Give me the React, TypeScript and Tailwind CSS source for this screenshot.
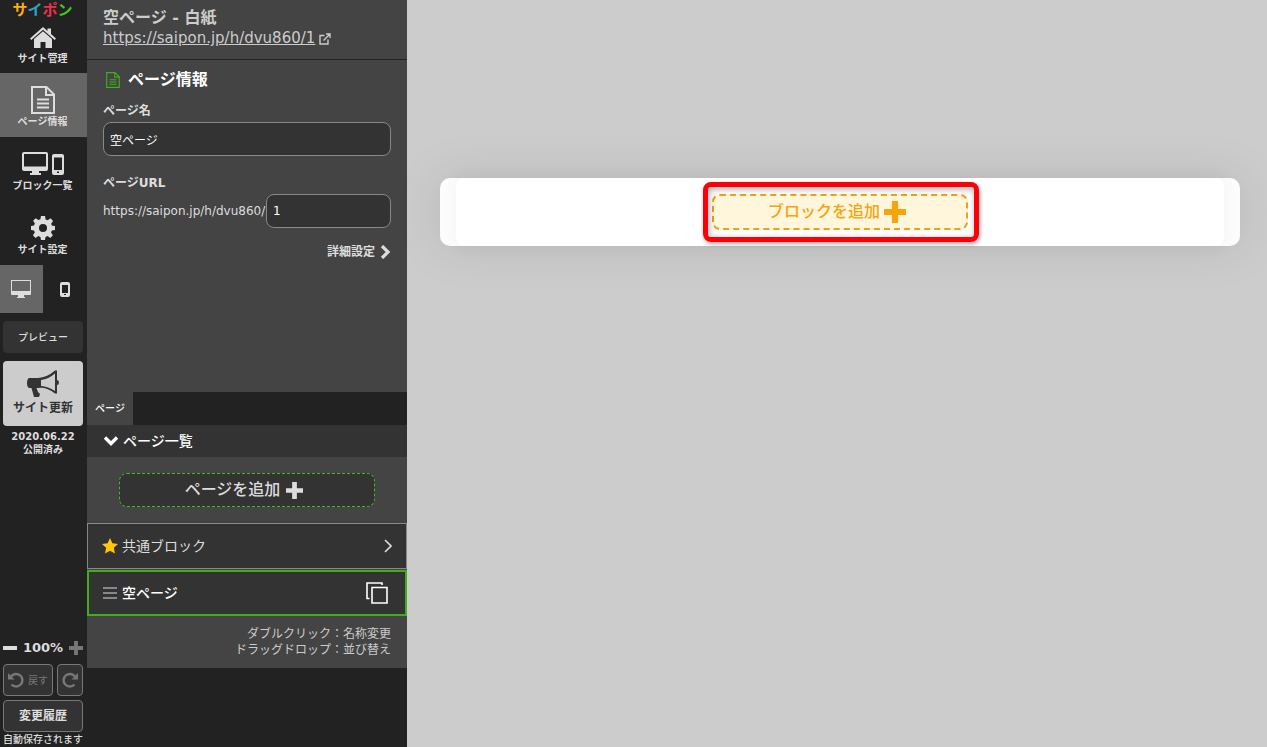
import { useState } from 'react'
import type { ReactNode } from 'react'
import clsx from 'clsx'

type NavItem = { id: string; label: string; icon: ReactNode }

const navItems: NavItem[] = [
  { id: 'site', label: 'サイト管理', icon: <HomeIcon /> },
  { id: 'page', label: 'ページ情報', icon: <PageIcon className="h-7 w-6" /> },
  { id: 'blocks', label: 'ブロック一覧', icon: <DevicesIcon /> },
  { id: 'settings', label: 'サイト設定', icon: <GearIcon /> },
]

export default function App() {
  const [active, setActive] = useState('page')

  return (
    <div className="flex h-screen overflow-hidden bg-[#ccc] font-['DejaVu_Sans','Noto_Sans_CJK_JP',sans-serif] text-[#ddd]">
      <Sidebar active={active} onSelect={setActive} />
      <PagePanel />
      <Canvas />
    </div>
  )
}

function Sidebar({ active, onSelect }: { active: string; onSelect: (id: string) => void }) {
  const [device, setDevice] = useState('pc')
  const [zoom, setZoom] = useState(100)

  return (
    <aside className="flex w-[87px] shrink-0 flex-col bg-[#222] font-bold">
      <a href="#" className="h-[18px] pt-0.5 pr-0.5 text-center text-[15px] leading-4 font-bold">
        <span className="text-[#ffae10]">サ</span>
        <span className="text-[#25a8c8]">イ</span>
        <span className="text-[#f0324b]">ポ</span>
        <span className="text-[#45c81e]">ン</span>
      </a>

      <nav className="flex flex-col">
        {navItems.map((item, i) => (
          <button
            key={item.id}
            onClick={() => onSelect(item.id)}
            className={clsx(
              'flex flex-col items-center justify-end gap-0.5 pr-0.5 text-[10px] leading-3 hover:text-white',
              i === 0 ? 'h-[55px] pb-2' : 'h-16 pb-[9px]',
              active === item.id && 'bg-[#666]',
            )}
          >
            <span className="flex h-7 items-center">{item.icon}</span>
            {item.label}
          </button>
        ))}
      </nav>

      {/* Device switch */}
      <div className="grid h-12 grid-cols-2 pr-px">
        <button
          aria-label="PC"
          onClick={() => setDevice('pc')}
          className={clsx('flex items-center justify-center pr-0.5', device === 'pc' && 'bg-[#666]')}
        >
          <svg viewBox="0 0 22 18" className="h-[18px] w-[22px]" fill="currentColor">
            <path fillRule="evenodd" d="M1 0h20v14q0 1-1 1h-6v2h1v1H7v-1h1v-2H2q-1 0-1-1zM2 1v10h18V1z" />
          </svg>
        </button>
        <button
          aria-label="スマートフォン"
          onClick={() => setDevice('sp')}
          className={clsx('flex items-center justify-center', device === 'sp' && 'bg-[#666]')}
        >
          <svg viewBox="0 0 10 15" className="h-[15px] w-2.5" fill="currentColor">
            <path fillRule="evenodd" d="M2 0h6q2 0 2 2v11q0 2-2 2H2q-2 0-2-2V2q0-2 2-2zm0 3v8h6V3zm2 9v1h2v-1z" />
          </svg>
        </button>
      </div>

      <div className="flex flex-col gap-2 pt-2 pr-1 pl-[3px]">
        <button className="h-8 rounded bg-[#333] text-[10px] font-medium">プレビュー</button>
        <button className="flex h-[65px] flex-col items-center justify-end gap-0.5 rounded bg-[#ccc] pb-2.5 text-xs leading-4 text-[#333]">
          <BullhornIcon />
          サイト更新
        </button>
      </div>
      <p className="pt-1 pr-px text-center text-[10px] leading-[13px]">
        2020.06.22
        <br />
        公開済み
      </p>

      <div className="mt-auto pr-1 pl-[3px]">
        <div className="flex h-8 items-center justify-between text-[13px]">
          <button aria-label="縮小" onClick={() => setZoom(zoom - 10)}>
            <svg viewBox="0 0 14 4" className="h-1 w-3.5" fill="currentColor">
              <path d="M0 0h14v4H0z" />
            </svg>
          </button>
          <span>{zoom}%</span>
          <button aria-label="拡大" onClick={() => setZoom(zoom + 10)} className="text-[#777]">
            <PlusIcon className="size-3.5" />
          </button>
        </div>
        <div className="flex gap-1 text-[#777]">
          <button className="flex h-8 flex-1 items-center justify-center gap-1 rounded border border-[#777] bg-[#333] text-[10px] font-normal">
            <UndoIcon />
            戻す
          </button>
          <button aria-label="やり直す" className="flex h-8 w-[26px] items-center justify-center rounded border border-[#777] bg-[#333]">
            <UndoIcon className="-scale-x-100" />
          </button>
        </div>
        <button className="mt-1 h-8 w-full rounded border border-[#777] bg-[#333] text-xs">変更履歴</button>
        <p className="text-center text-[10px] leading-[15px] font-medium whitespace-nowrap">自動保存されます</p>
      </div>
    </aside>
  )
}

function PagePanel() {
  const [name, setName] = useState('空ページ')
  const [slug, setSlug] = useState('1')
  const inputClass =
    'h-[34px] rounded-lg border border-[#888] bg-[#333] px-1.5 text-xs text-white focus:outline-none focus:border-[#ccc]'

  return (
    <section className="flex w-80 shrink-0 flex-col bg-[#222]">
      <header className="border-b border-[#222] bg-[#444] px-4 pt-[7px] pb-2.5 text-[#ccc]">
        <h1 className="text-base leading-[21px] font-bold">空ページ - 白紙</h1>
        <a href="https://saipon.jp/h/dvu860/1" className="flex items-center gap-1 text-[15px] leading-[21px]">
          <span className="underline">https://saipon.jp/h/dvu860/1</span>
          <ExternalIcon />
        </a>
      </header>

      <div className="h-[332px] shrink-0 bg-[#444] px-4 pt-[7px]">
        <h2 className="flex items-center gap-2 pl-[3px] text-base leading-[26px] font-bold text-white">
          <PageIcon className="h-4 w-3.5 text-[#3eae1c]" />
          ページ情報
        </h2>

        <label htmlFor="page-name" className="mt-2.5 block text-xs leading-4 font-bold">
          ページ名
        </label>
        <input
          id="page-name"
          value={name}
          onChange={(e) => setName(e.target.value)}
          className={clsx(inputClass, 'mt-[3px] w-full')}
        />

        <label htmlFor="page-url" className="mt-[19px] block text-xs leading-4 font-bold">
          ページURL
        </label>
        <div className="mt-[3px] flex items-center justify-between text-xs">
          <span>https://saipon.jp/h/dvu860/</span>
          <input
            id="page-url"
            value={slug}
            onChange={(e) => setSlug(e.target.value)}
            className={clsx(inputClass, 'w-[125px]')}
          />
        </div>

        <button className="mt-4 ml-auto flex items-center gap-1 text-xs leading-4 font-bold">
          詳細設定
          <svg viewBox="0 0 10 14" className="h-3.5 w-3" fill="none" stroke="currentColor" strokeWidth="3.2">
            <path d="M2 1l6 6-6 6" />
          </svg>
        </button>
      </div>

      {/* Tabs */}
      <div className="flex h-[33px] shrink-0" role="tablist">
        <button role="tab" aria-selected="true" className="w-[46px] bg-[#444] text-[10px] font-medium text-white">
          ページ
        </button>
      </div>

      <button className="flex h-8 shrink-0 items-center gap-1 bg-[#333] px-4 text-sm leading-5 font-medium text-white">
        <svg viewBox="0 0 16 10" className="h-2.5 w-4" fill="none" stroke="currentColor" strokeWidth="3.4">
          <path d="M2 1.5l6 6 6-6" />
        </svg>
        ページ一覧
      </button>

      <div className="bg-[#444]">
        <div className="px-8 py-4">
          <button className="flex h-[34px] w-full items-center justify-center gap-1.5 rounded-lg border border-dashed border-[#45b81c] bg-[#333] pr-1.5 text-base font-medium">
            ページを追加
            <PlusIcon className="size-[17px]" />
          </button>
        </div>

        <ul className="flex flex-col gap-px">
          <li>
            <button className="flex h-[46px] w-full items-center gap-1 border border-[#888] bg-[#333] pr-3.5 pb-px pl-3.5 text-sm">
              <svg viewBox="0 0 16 16" className="size-4" fill="#ffc80a">
                <path d="M8 0l2.4 5.2 5.6.7-4.1 3.9 1 5.7L8 12.7l-4.9 2.8 1-5.7L0 5.9l5.6-.7z" />
              </svg>
              共通ブロック
              <svg viewBox="0 0 8 14" className="ml-auto h-3.5 w-2" fill="none" stroke="currentColor" strokeWidth="1.6">
                <path d="M1 1l6 6-6 6" />
              </svg>
            </button>
          </li>
          <li className="flex h-[46px] items-center gap-1 border-2 border-[#3eae1c] bg-[#333] pr-[17px] pb-px pl-[13px] text-sm font-medium text-white">
            <svg viewBox="0 0 16 12" className="h-3 w-4" fill="#888">
              <path d="M1 0h14v2H1zM1 5h14v2H1zM1 10h14v2H1z" />
            </svg>
            空ページ
            <button aria-label="複製" className="ml-auto">
              <svg viewBox="0 0 22 22" className="size-[22px]" fill="none" stroke="currentColor" strokeWidth="1.6">
                <path d="M6 5.500h15V21H6zM3.500 16.500H1V1h15v2" />
              </svg>
            </button>
          </li>
        </ul>

        <p className="px-4 pt-2.5 pb-2.5 text-right text-xs leading-4 text-[#ccc]">
          ダブルクリック：名称変更
          <br />
          ドラッグドロップ：並び替え
        </p>
      </div>
    </section>
  )
}

function Canvas() {
  return (
    <main className="min-w-0 flex-1 pt-[178px] pr-[27px] pl-[33px]">
      <div className="rounded-[10px] bg-[#fcfcfc] px-4 shadow-[0_0_50px_rgba(0,0,0,0.1)]">
        <div className="flex h-[68px] items-center justify-center rounded-lg bg-white shadow-[0_0_16px_rgba(0,0,0,0.04)]">
          <div className="relative">
            <button className="flex h-9 w-64 items-center justify-center gap-1 rounded-lg border-2 border-dashed border-[#f0a010] bg-[#fff6dc] pr-1.5 text-base font-medium text-[#f7a30c]">
              ブロックを追加
              <PlusIcon className="size-[22px]" />
            </button>
            {/* Highlight ring around the button */}
            <div className="pointer-events-none absolute -inset-y-3 -right-[11px] -left-[9px] rounded-lg border-5 border-[#fb0007] shadow-[1px_2px_4px_rgba(0,0,0,0.35),inset_1px_2px_6px_rgba(0,0,0,0.35)]" />
          </div>
        </div>
      </div>
    </main>
  )
}

function HomeIcon() {
  return (
    <svg viewBox="0 0 26 21" className="h-[21px] w-[26px]" fill="currentColor">
      <path d="M13 0l4.500 4V1.500H21V7l5 4.500-1.300 1.500L13 2.800 1.300 13 0 11.500z" />
      <path d="M13 4.300l9 7.800V21h-6.500v-6h-5v6H4v-8.900z" />
    </svg>
  )
}

function PageIcon({ className }: { className?: string }) {
  return (
    <svg viewBox="0 0 24 28" className={className} fill="none" stroke="currentColor" strokeWidth="2">
      <path d="M1 1h14.500L23 8.500V27H1zM15 1v8h8" />
      <path d="M6 13.500h12M6 17.500h12M6 21.500h12" />
    </svg>
  )
}

function DevicesIcon() {
  return (
    <svg viewBox="0 0 42 24" className="h-6 w-[42px]" fill="currentColor">
      <path fillRule="evenodd" d="M2 0h22q2 0 2 2v15q0 2-2 2h-7v2h2v2H8v-2h2v-2H2q-2 0-2-2V2q0-2 2-2zm0 2v12.500h22V2z" />
      <path
        fillRule="evenodd"
        d="M32 2h8q2 0 2 2v17q0 2-2 2h-8q-2 0-2-2V4q0-2 2-2zm0 3.500V18h8V5.500zm3 14V21h2v-1.500z"
      />
    </svg>
  )
}

function GearIcon() {
  return (
    <svg viewBox="0 0 24 24" className="size-6" fill="currentColor">
      <path
        fillRule="evenodd"
        d="M10 0h4l.6 3.400 2.100.9L19.500 2.300l2.600 2.600-1.900 2.800.8 2L24 10v4l-3.200.6-.8 2 1.900 2.700-2.600 2.700-2.700-1.900-2.100.8L14 24h-4l-.6-3.100-2.100-.8L4.600 22l-2.700-2.700 1.900-2.700-.8-2L0 14v-4l3-.5.9-2-1.800-2.700L4.700 2.200l2.700 1.900 2-.8zM12 8a4 4 0 1 0 0 8 4 4 0 0 0 0-8z"
      />
    </svg>
  )
}

function BullhornIcon() {
  return (
    <svg viewBox="0 0 32 28" className="h-7 w-8" fill="currentColor">
      <path d="M2 8h10v10H9.500l1.500 4 2 2-1 3H7L4.500 18H2q-2-1-2-5t2-5z" />
      <path
        fillRule="evenodd"
        d="M11 8q9-.5 17-7.500h2V10q2 0 2 2.500T30 15v8.500h-2Q20 17 11 18zm3 2v6q7 .3 14 5V3.500q-6.500 5.500-14 6.500z"
      />
    </svg>
  )
}

function UndoIcon({ className }: { className?: string }) {
  return (
    <svg viewBox="0 0 16 16" className={clsx('size-4 shrink-0', className)}>
      <path d="M3 4.500A6.300 6.300 0 1 1 3.500 12.500" fill="none" stroke="currentColor" strokeWidth="2.500" />
      <path d="M0 1v6.500h6.500z" fill="currentColor" />
    </svg>
  )
}

function ExternalIcon() {
  return (
    <svg viewBox="0 0 12 12" className="size-3" fill="none" stroke="currentColor" strokeWidth="1.400">
      <path d="M5.500 2.500H1V11h8V6.500M4.500 7.500l6-6M7 1h4v4" />
    </svg>
  )
}

function PlusIcon({ className }: { className?: string }) {
  return (
    <svg viewBox="0 0 18 18" className={className} fill="currentColor">
      <path d="M6.500 0h5v6.500H18v5h-6.500V18h-5v-6.500H0v-5h6.500z" />
    </svg>
  )
}
